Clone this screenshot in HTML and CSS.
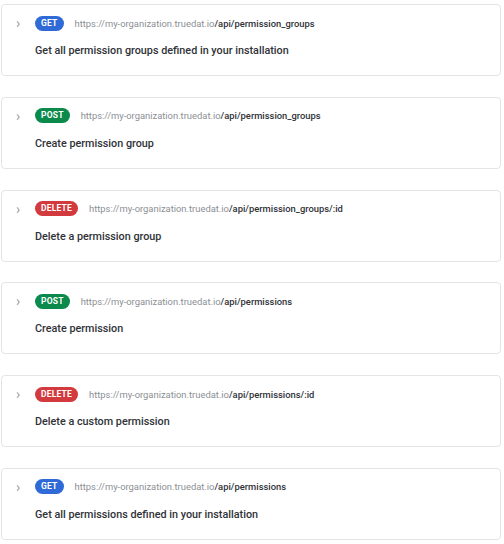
FILE: index.html
```html
<!DOCTYPE html>
<html lang="en">
<head>
    <meta charset="UTF-8">
    <title>Permissions API</title>
    <link rel="stylesheet" href="styles.css">
</head>
<body>
    <div class="endpoints">
        <div class="endpoint">
            <div class="endpoint-head">
                <span class="chevron">&#x203A;</span>
                <span class="method get">GET</span>
                <span class="url">https://my-organization.truedat.io<b>/api/permission_groups</b></span>
            </div>
            <div class="endpoint-desc">Get all permission groups defined in your installation</div>
        </div>
        <div class="endpoint">
            <div class="endpoint-head">
                <span class="chevron">&#x203A;</span>
                <span class="method post">POST</span>
                <span class="url">https://my-organization.truedat.io<b>/api/permission_groups</b></span>
            </div>
            <div class="endpoint-desc">Create permission group</div>
        </div>
        <div class="endpoint">
            <div class="endpoint-head">
                <span class="chevron">&#x203A;</span>
                <span class="method delete">DELETE</span>
                <span class="url">https://my-organization.truedat.io<b>/api/permission_groups/:id</b></span>
            </div>
            <div class="endpoint-desc">Delete a permission group</div>
        </div>
        <div class="endpoint">
            <div class="endpoint-head">
                <span class="chevron">&#x203A;</span>
                <span class="method post">POST</span>
                <span class="url">https://my-organization.truedat.io<b>/api/permissions</b></span>
            </div>
            <div class="endpoint-desc">Create permission</div>
        </div>
        <div class="endpoint">
            <div class="endpoint-head">
                <span class="chevron">&#x203A;</span>
                <span class="method delete">DELETE</span>
                <span class="url">https://my-organization.truedat.io<b>/api/permissions/:id</b></span>
            </div>
            <div class="endpoint-desc">Delete a custom permission</div>
        </div>
        <div class="endpoint">
            <div class="endpoint-head">
                <span class="chevron">&#x203A;</span>
                <span class="method get">GET</span>
                <span class="url">https://my-organization.truedat.io<b>/api/permissions</b></span>
            </div>
            <div class="endpoint-desc">Get all permissions defined in your installation</div>
        </div>
    </div>
</body>
</html>
```

FILE: styles.css
```css
body, html {
    margin: 0;
    padding: 0;
    background-color: white;
    font-family: Roboto, 'Liberation Sans', sans-serif;
    color: #2f3237;
}
.endpoints {
    display: flex;
    flex-direction: column;
    gap: 20.8px;
    padding: 4px 3px 0 1px;
}
.endpoint {
    height: 72px;
    box-sizing: border-box;
    border: 1px solid #e3e4e6;
    border-radius: 4px;
    padding: 10px 0 0 14px;
}
.endpoint-head {
    display: flex;
    align-items: center;
    height: 16px;
}
.chevron {
    width: 19px;
    color: #9a9da2;
    font-size: 14px;
    line-height: 16px;
}
.method {
    height: 15px;
    line-height: 15px;
    padding: 0 6px;
    border-radius: 8px;
    color: white;
    font-size: 8.5px;
    font-weight: 700;
    letter-spacing: 0.2px;
    margin-right: 11px;
}
.method.get {
    background-color: #2f6ad6;
}
.method.post {
    background-color: #0b8a4c;
}
.method.delete {
    background-color: #d33a3e;
}
.url {
    font-size: 9.4px;
    color: #8b8f95;
}
.url b {
    font-weight: 500;
    color: #2f3237;
}
.endpoint-desc {
    margin: 13px 0 0 19px;
    font-size: 10.8px;
    font-weight: 500;
}
```
